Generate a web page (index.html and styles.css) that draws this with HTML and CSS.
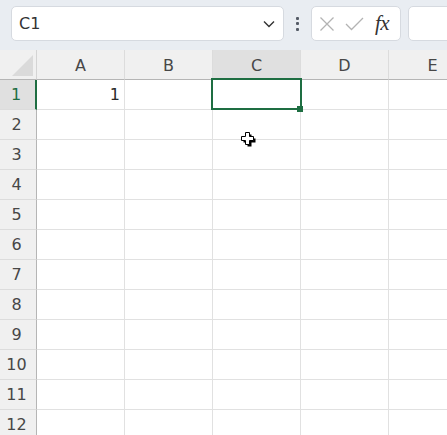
FILE: index.html
```html
<!DOCTYPE html>
<html>
<head>
<meta charset="utf-8">
<link rel="stylesheet" href="styles.css">
</head>
<body>
<div class="app">
  <div class="toolbar">
    <div class="namebox">
      <span class="name">C1</span>
      <svg class="chev" width="12" height="8" viewBox="0 0 12 8"><path d="M1 1.5 L6 6.5 L11 1.5" fill="none" stroke="#333" stroke-width="1.4"/></svg>
    </div>
    <div class="dots"><span></span><span></span><span></span></div>
    <div class="fbuttons">
      <svg width="16" height="16" viewBox="0 0 16 16"><path d="M1.5 1.5 L14.5 14.5 M14.5 1.5 L1.5 14.5" stroke="#b3b3b3" stroke-width="1.3" fill="none"/></svg>
      <svg width="19" height="14" viewBox="0 0 19 14"><path d="M1 7 L6.5 12.5 L18 1" stroke="#b3b3b3" stroke-width="1.3" fill="none"/></svg>
      <span class="fx">fx</span>
    </div>
    <div class="finput"></div>
  </div>
  <div class="sheet">
    <div class="grid">
      <div class="corner"><div class="tri"></div></div>
      <div class="ch">A</div>
      <div class="ch">B</div>
      <div class="ch active">C</div>
      <div class="ch">D</div>
      <div class="ch">E</div>

      <div class="rh active">1</div>
      <div class="c num">1</div><div class="c"></div><div class="c"></div><div class="c"></div><div class="c"></div>
      <div class="rh">2</div><div class="c"></div><div class="c"></div><div class="c"></div><div class="c"></div><div class="c"></div>
      <div class="rh">3</div><div class="c"></div><div class="c"></div><div class="c"></div><div class="c"></div><div class="c"></div>
      <div class="rh">4</div><div class="c"></div><div class="c"></div><div class="c"></div><div class="c"></div><div class="c"></div>
      <div class="rh">5</div><div class="c"></div><div class="c"></div><div class="c"></div><div class="c"></div><div class="c"></div>
      <div class="rh">6</div><div class="c"></div><div class="c"></div><div class="c"></div><div class="c"></div><div class="c"></div>
      <div class="rh">7</div><div class="c"></div><div class="c"></div><div class="c"></div><div class="c"></div><div class="c"></div>
      <div class="rh">8</div><div class="c"></div><div class="c"></div><div class="c"></div><div class="c"></div><div class="c"></div>
      <div class="rh">9</div><div class="c"></div><div class="c"></div><div class="c"></div><div class="c"></div><div class="c"></div>
      <div class="rh">10</div><div class="c"></div><div class="c"></div><div class="c"></div><div class="c"></div><div class="c"></div>
      <div class="rh">11</div><div class="c"></div><div class="c"></div><div class="c"></div><div class="c"></div><div class="c"></div>
      <div class="rh">12</div><div class="c"></div><div class="c"></div><div class="c"></div><div class="c"></div><div class="c"></div>
    </div>
    <div class="selection"><div class="handle"></div></div>
    <svg class="cursor" width="17" height="17" viewBox="0 0 17 17">
      <path d="M6.5 2.5 H10.5 V6.5 H14.5 V10.5 H10.5 V14.5 H6.5 V10.5 H2.5 V6.5 H6.5 Z" fill="#000" transform="translate(1,1)"/>
      <path d="M5.5 1.5 H9.5 V5.5 H13.5 V9.5 H9.5 V13.5 H5.5 V9.5 H1.5 V5.5 H5.5 Z" fill="#fff" stroke="#000" stroke-width="1"/>
    </svg>
  </div>
</div>
</body>
</html>
```

FILE: styles.css
```css
* { box-sizing: border-box; }
html, body { margin: 0; padding: 0; }
body {
  width: 447px;
  height: 435px;
  overflow: hidden;
  background: #fff;
  font-family: "DejaVu Sans", "Noto Sans", sans-serif;
}
.app { width: 447px; height: 435px; overflow: hidden; }
.toolbar {
  height: 50px;
  background: #e9edf2;
  display: flex;
  align-items: flex-start;
  padding: 6px 0 0 11px;
}
.namebox {
  width: 273px;
  height: 35px;
  background: #fff;
  border: 1px solid #d6dae0;
  border-radius: 5px;
  display: flex;
  align-items: center;
  justify-content: space-between;
  padding: 0 8px 0 7px;
  flex-shrink: 0;
}
.name { font-size: 16px; color: #333; }
.chev { margin-top: 1px; }
.dots {
  width: 27px;
  height: 35px;
  display: flex;
  flex-direction: column;
  align-items: center;
  justify-content: center;
  gap: 2.5px;
  flex-shrink: 0;
}
.dots span { width: 3px; height: 3px; background: #555b66; border-radius: 1px; }
.fbuttons {
  width: 90px;
  height: 35px;
  background: #fff;
  border: 1px solid #d6dae0;
  border-radius: 5px;
  display: flex;
  align-items: center;
  padding: 0 0 0 7px;
  gap: 10px;
  flex-shrink: 0;
}
.fx {
  font-family: "Liberation Serif", "DejaVu Serif", serif;
  font-style: italic;
  font-weight: normal;
  font-size: 21px;
  color: #333;
  margin-left: 1px;
  letter-spacing: -0.5px;
}
.finput {
  margin-left: 7px;
  width: 60px;
  height: 35px;
  background: #fff;
  border: 1px solid #d6dae0;
  border-radius: 5px;
  flex-shrink: 0;
}
.sheet { position: relative; }
.grid {
  display: grid;
  grid-template-columns: 37px 88px 88px 88px 88px 88px;
  grid-template-rows: 30px repeat(12, 30px);
  width: 477px;
}
.corner {
  background: #f0f0f0;
  border-right: 1px solid #d4d4d4;
  border-bottom: 1px solid #b5b5b5;
  position: relative;
}
.tri {
  position: absolute;
  right: 3px;
  bottom: 3px;
  width: 0; height: 0;
  border-left: 21px solid transparent;
  border-bottom: 21px solid #dadada;
}
.ch {
  background: #f0f0f0;
  border-right: 1px solid #dcdcdc;
  border-bottom: 1px solid #b5b5b5;
  display: flex;
  align-items: center;
  justify-content: center;
  font-size: 16px;
  color: #474747;
  padding-top: 1px;
}
.ch.active { background: #e0e0e0; }
.rh {
  background: #f0f0f0;
  border-right: 1px solid #b5b5b5;
  border-bottom: 1px solid #dcdcdc;
  display: flex;
  align-items: center;
  justify-content: center;
  font-size: 16px;
  color: #474747;
  padding-right: 3px;
}
.rh.active {
  background: #e0e0e0;
  color: #1e6e42;
  border-right: 2px solid #1e6e42;
}
.c {
  background: #fff;
  border-right: 1px solid #e1e1e1;
  border-bottom: 1px solid #e1e1e1;
}
.c.num {
  display: flex;
  align-items: center;
  justify-content: flex-end;
  padding-right: 4px;
  font-size: 16px;
  color: #2a2a2a;
}
.selection {
  position: absolute;
  left: 211px;
  top: 28px;
  width: 91px;
  height: 32px;
  border: 2px solid #1e6e42;
}
.handle {
  position: absolute;
  right: -3px;
  bottom: -4px;
  width: 6px;
  height: 6px;
  background: #1e6e42;
}
.cursor {
  position: absolute;
  left: 240px;
  top: 81px;
}
```
